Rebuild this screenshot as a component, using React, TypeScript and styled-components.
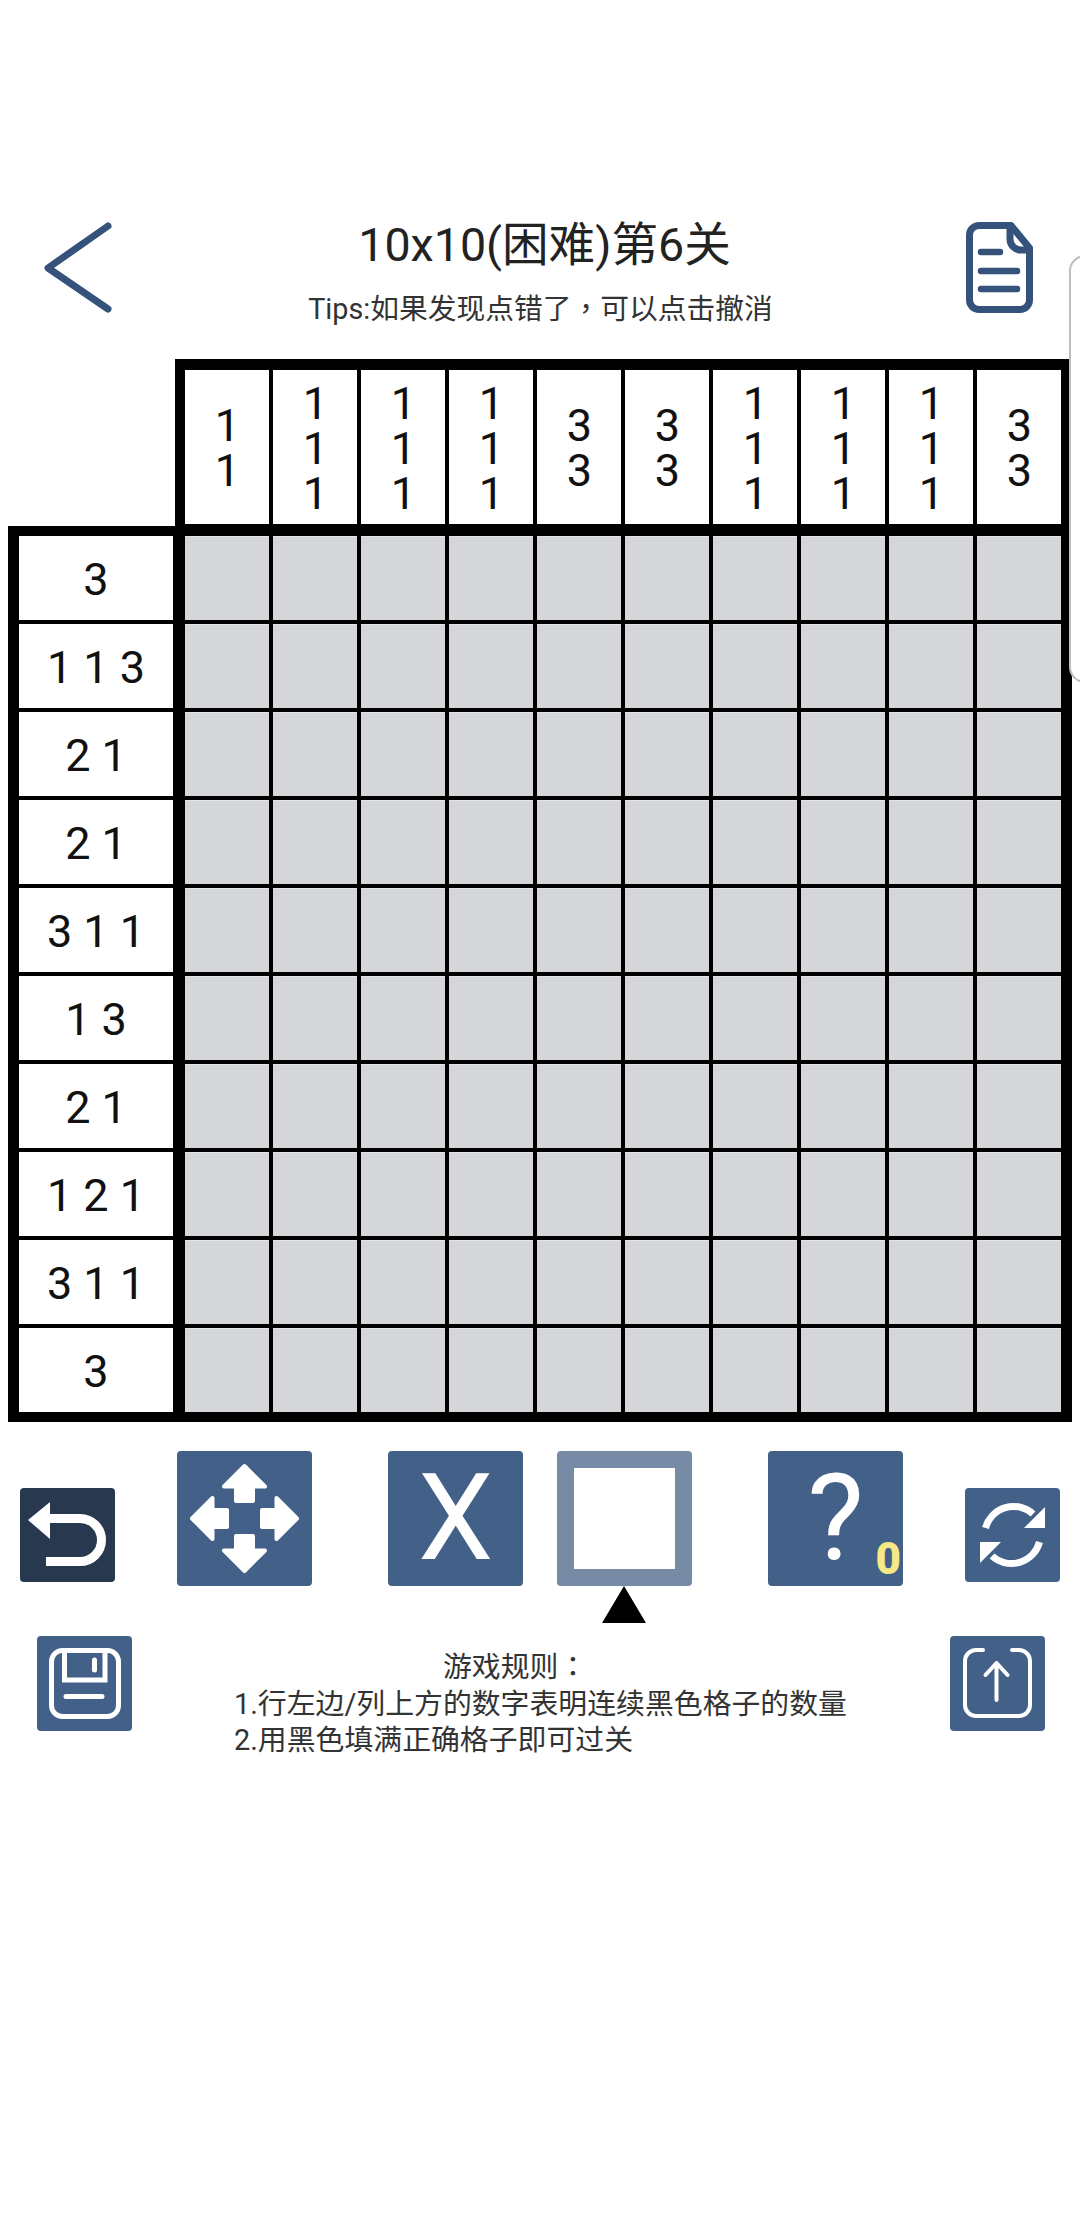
import { FC } from 'react';
import styled, { createGlobalStyle } from 'styled-components';

const columnClues = [
	[1, 1],
	[1, 1, 1],
	[1, 1, 1],
	[1, 1, 1],
	[3, 3],
	[3, 3],
	[1, 1, 1],
	[1, 1, 1],
	[1, 1, 1],
	[3, 3],
];

const rowClues = ['3', '1 1 3', '2 1', '2 1', '3 1 1', '1 3', '2 1', '1 2 1', '3 1 1', '3'];

const cells = Array.from({ length: 100 }, (_, index) => index);

const MOVE_ARROW = 'M67.5 15 L88 35.5 H76 V50 H59 V35.5 H47 Z';

export default function App() {
	return (
		<Page>
			<GlobalStyle />
			<EdgeHandle />
			<Header>
				<BackIcon />
				<Titles>
					<Title>10x10(困难)第6关</Title>
					<Subtitle>
						Tips:如果发现点错了<Punct>，</Punct>可以点击撤消
					</Subtitle>
				</Titles>
				<DocIcon />
			</Header>

			<Board>
				<TopClues>
					{columnClues.map((clue, index) => (
						<ColumnClue key={index}>
							{clue.map((value, i) => (
								<ClueDigit key={i}>{value}</ClueDigit>
							))}
						</ColumnClue>
					))}
				</TopClues>
				<BoardBody>
					<LeftClues>
						{rowClues.map((clue, index) => (
							<RowClue key={index}>{clue}</RowClue>
						))}
					</LeftClues>
					<Cells>
						{cells.map((cell) => (
							<Cell key={cell} />
						))}
					</Cells>
				</BoardBody>
			</Board>

			<Tools>
				<SmallButton $dark $lowered>
					<UndoIcon />
				</SmallButton>
				<BigButton $gap={62}>
					<MoveIcon />
				</BigButton>
				<BigButton $gap={76}>
					<ButtonLabel>X</ButtonLabel>
				</BigButton>
				<BigButton $gap={34} $selected>
					<Swatch />
					<Pointer />
				</BigButton>
				<BigButton $gap={76}>
					<ButtonLabel>?</ButtonLabel>
					<HintCount>0</HintCount>
				</BigButton>
				<SmallButton $gap={62} $lowered>
					<RefreshIcon />
				</SmallButton>
			</Tools>

			<Footer>
				<SmallButton>
					<SaveIcon />
				</SmallButton>
				<Rules>
					<RulesHeading>
						游戏规则<Punct>：</Punct>
					</RulesHeading>
					<div>1.行左边/列上方的数字表明连续黑色格子的数量</div>
					<div>2.用黑色填满正确格子即可过关</div>
				</Rules>
				<SmallButton>
					<UploadIcon />
				</SmallButton>
			</Footer>
		</Page>
	);
}

const BackIcon: FC = () => (
	<BackSvg viewBox="0 0 80 92" fill="none" stroke="#34527a" strokeWidth="7" strokeLinecap="round" strokeLinejoin="round">
		<path d="M68 4 L8 46 L68 87" />
	</BackSvg>
);

const DocIcon: FC = () => (
	<DocSvg viewBox="0 0 67 91" fill="none" stroke="#34527a" strokeWidth="7" strokeLinecap="round" strokeLinejoin="round">
		<path d="M45 3.5 H13 A9.5 9.5 0 0 0 3.5 13 V78 A9.5 9.5 0 0 0 13 87.5 H54 A9.5 9.5 0 0 0 63.5 78 V26 Z" />
		<path d="M44 5 V17 A11 11 0 0 0 55 28 H63" />
		<path d="M15 30 H34 M15 49 H51 M15 67 H51" strokeWidth="6.5" />
	</DocSvg>
);

const UndoIcon: FC = () => (
	<IconSvg viewBox="0 0 95 94">
		<path d="M8 32 L30 14 V51 Z" fill="#fff" />
		<path d="M26 73.5 H60 A21.5 21.5 0 0 0 60 30.5 H28" fill="none" stroke="#fff" strokeWidth="9" />
	</IconSvg>
);

const MoveIcon: FC = () => (
	<IconSvg viewBox="0 0 135 135">
		{[0, 90, 180, 270].map((angle) => (
			<path
				key={angle}
				d={MOVE_ARROW}
				transform={`rotate(${angle} 67.5 67.5)`}
				fill="#fff"
				stroke="#fff"
				strokeWidth="4"
				strokeLinejoin="round"
			/>
		))}
	</IconSvg>
);

const RefreshIcon: FC = () => (
	<IconSvg viewBox="0 0 95 94">
		{[0, 180].map((angle) => (
			<g key={angle} transform={`rotate(${angle} 47.5 47)`}>
				<path d="M20.5 40 A29 29 0 0 1 68 26" fill="none" stroke="#fff" strokeWidth="7" />
				<path d="M80 19 V40 H59 Z" fill="#fff" />
			</g>
		))}
	</IconSvg>
);

const SaveIcon: FC = () => (
	<IconSvg viewBox="0 0 95 95" fill="none" stroke="#fff">
		<rect x="14.5" y="14.5" width="67" height="66" rx="11" strokeWidth="5" />
		<path d="M27.5 14 V44 H68 V14" strokeWidth="5" />
		<path d="M57.5 24 V34" strokeWidth="5" strokeLinecap="round" />
		<path d="M29 60.5 H65" strokeWidth="5" strokeLinecap="round" />
	</IconSvg>
);

const UploadIcon: FC = () => (
	<IconSvg viewBox="0 0 95 95" fill="none" stroke="#fff" strokeWidth="4" strokeLinecap="round" strokeLinejoin="round">
		<path d="M33 14 H26 A11 11 0 0 0 15 25 V69 A11 11 0 0 0 26 80 H69 A11 11 0 0 0 80 69 V25 A11 11 0 0 0 69 14 H62" />
		<path d="M46.5 64 V27 M35.5 39 L46.5 27 L57.5 39" />
	</IconSvg>
);

const GlobalStyle = createGlobalStyle`
	html,
	body {
		margin: 0;
		background: #fff;
	}
`;

const Page = styled.div`
	position: relative;
	width: 1080px;
	height: 2220px;
	overflow: hidden;
	background: #fff;
	font-family: Roboto, 'Noto Sans CJK SC', sans-serif;
	color: #111;
`;

const EdgeHandle = styled.div`
	position: absolute;
	top: 255px;
	left: 1069px;
	width: 40px;
	height: 428px;
	box-sizing: border-box;
	background: #fff;
	border: 2px solid #bdbdbd;
	border-radius: 16px;
`;

const Header = styled.header`
	display: grid;
	grid-template-columns: 120px 846px 67px;
	height: 359px;
	box-sizing: border-box;
	padding-top: 222px;
`;

const BackSvg = styled.svg`
	display: block;
	width: 80px;
	height: 92px;
	margin-left: 40px;
`;

const DocSvg = styled.svg`
	display: block;
	width: 67px;
	height: 91px;
`;

const Titles = styled.div`
	display: flex;
	flex-direction: column;
	align-items: center;
`;

const Title = styled.h1`
	margin: 0;
	padding-left: 3px;
	font-size: 46.6px;
	font-weight: 400;
	line-height: 46px;
	color: #222;
`;

const Subtitle = styled.p`
	margin: 21px 0 0;
	padding-right: 5px;
	font-size: 28.75px;
	line-height: 36px;
	color: #333;
`;

const Punct = styled.span`
	font-family: 'Noto Sans CJK TC', sans-serif;
`;

const Board = styled.section`
	display: flex;
	flex-direction: column;
	align-items: flex-end;
	width: 1072px;
`;

const TopClues = styled.div`
	display: grid;
	grid-template-columns: repeat(10, 84px);
	gap: 4px;
	padding: 11px 11px 2px 10px;
	background: #000;
`;

const ColumnClue = styled.div`
	display: flex;
	flex-direction: column;
	align-items: center;
	justify-content: center;
	height: 154px;
	box-sizing: border-box;
	padding: 2px 0 0 1px;
	background: #fff;
`;

const ClueDigit = styled.span`
	font-size: 45px;
	line-height: 45px;
`;

const BoardBody = styled.div`
	display: flex;
	gap: 12px;
	width: 1064px;
	box-sizing: border-box;
	padding: 10px 11px 10px 11px;
	background: #000;
`;

const LeftClues = styled.div`
	display: grid;
	grid-template-rows: repeat(10, 84px);
	gap: 4px;
	width: 154px;
`;

const RowClue = styled.div`
	display: flex;
	align-items: center;
	justify-content: center;
	padding-top: 2px;
	background: #fff;
	font-size: 45px;
`;

const Cells = styled.div`
	display: grid;
	grid-template-columns: repeat(10, 84px);
	grid-auto-rows: 84px;
	gap: 4px;
`;

const Cell = styled.div`
	background: #d5d6da;
	box-shadow: inset 0 1px 0 #e4e5e8;
`;

const Tools = styled.div`
	display: flex;
	align-items: flex-start;
	padding: 29px 0 0 20px;
`;

const BigButton = styled.div<{ $gap?: number; $selected?: boolean }>`
	position: relative;
	display: flex;
	align-items: center;
	justify-content: center;
	flex: none;
	width: 135px;
	height: 135px;
	margin-left: ${(p) => p.$gap ?? 0}px;
	border-radius: 4px;
	background: ${(p) => (p.$selected ? '#778aa6' : '#436088')};
`;

const SmallButton = styled.div<{ $gap?: number; $dark?: boolean; $lowered?: boolean }>`
	flex: none;
	width: 95px;
	height: ${(p) => (p.$lowered ? 94 : 95)}px;
	margin-top: ${(p) => (p.$lowered ? 37 : 0)}px;
	margin-left: ${(p) => p.$gap ?? 0}px;
	border-radius: 4px;
	background: ${(p) => (p.$dark ? '#28384f' : '#436088')};
`;

const IconSvg = styled.svg`
	display: block;
	width: 100%;
	height: 100%;
`;

const ButtonLabel = styled.span`
	font-size: 120px;
	line-height: 135px;
	color: #fff;
`;

const HintCount = styled.span`
	position: absolute;
	right: 2px;
	bottom: 11px;
	font-size: 44px;
	font-weight: 900;
	line-height: 32px;
	color: #f6e884;
`;

const Swatch = styled.div`
	width: 101px;
	height: 101px;
	background: #fff;
`;

const Pointer = styled.div`
	position: absolute;
	top: 135px;
	left: 45px;
	width: 0;
	height: 0;
	border-left: 22px solid transparent;
	border-right: 22px solid transparent;
	border-bottom: 37px solid #000;
`;

const Footer = styled.div`
	display: flex;
	align-items: flex-start;
	padding: 50px 0 0 37px;
`;

const Rules = styled.div`
	flex: none;
	width: 614px;
	margin: 11px 102px 0;
	font-size: 28.86px;
	line-height: 36.5px;
	color: #333;
	white-space: nowrap;
`;

const RulesHeading = styled.div`
	padding-left: 209px;
`;
